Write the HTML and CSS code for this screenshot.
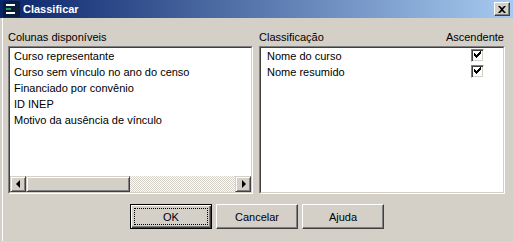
FILE: index.html
```html
<!DOCTYPE html>
<html lang="pt">
<head>
  <meta charset="UTF-8">
  <title>Classificar</title>
  <link rel="stylesheet" href="styles.css">
</head>
<body>
  <div class="window">
    <div class="titlebar">
      <svg class="app-icon" width="17" height="16" viewBox="0 0 17 16">
        <rect width="17" height="16" fill="#0b1c3c"/>
        <rect x="3" y="3" width="9" height="2" fill="#ffffff"/>
        <rect x="3" y="7" width="5" height="2" fill="#22a050"/>
        <rect x="3" y="11" width="9" height="2" fill="#ffffff"/>
      </svg>
      <span class="title">Classificar</span>
      <button class="close">
        <svg width="8" height="7" viewBox="0 0 8 7">
          <path d="M0 0h2l2 2 2-2h2L5 3.5 8 7H6L4 5 2 7H0l3-3.5z" fill="#000"/>
        </svg>
      </button>
    </div>

    <div class="content">
      <div class="panes">
        <div class="pane left">
          <div class="pane-head">Colunas disponíveis</div>
          <div class="listbox">
            <div class="listbox-inner">
              <ul class="items">
                <li>Curso representante</li>
                <li>Curso sem vínculo no ano do censo</li>
                <li>Financiado por convênio</li>
                <li>ID INEP</li>
                <li>Motivo da ausência de vínculo</li>
              </ul>
              <div class="hscroll">
                <div class="sb-btn"><span class="arrow-left"></span></div>
                <div class="sb-thumb"></div>
                <div class="sb-track"></div>
                <div class="sb-btn"><span class="arrow-right"></span></div>
              </div>
            </div>
          </div>
        </div>

        <div class="pane right">
          <div class="pane-head">
            <span>Classificação</span>
            <span>Ascendente</span>
          </div>
          <div class="listbox">
            <div class="listbox-inner">
              <ul class="items sort-items">
                <li class="sort-row"><span>Nome do curso</span><span class="checkbox checked"></span></li>
                <li class="sort-row"><span>Nome resumido</span><span class="checkbox checked"></span></li>
              </ul>
            </div>
          </div>
        </div>
      </div>

      <div class="buttons">
        <button class="btn default">OK</button>
        <button class="btn">Cancelar</button>
        <button class="btn">Ajuda</button>
      </div>
    </div>
  </div>
</body>
</html>
```

FILE: styles.css
```css
body {
  margin: 0;
  font-family: Tahoma, "Liberation Sans", Arial, sans-serif;
  font-size: 11px;
  color: #000;
  background-color: #d4d0c8;
}

.window {
  width: 513px;
  height: 241px;
  background-color: #d4d0c8;
  overflow: hidden;
}

/* title bar */
.titlebar {
  height: 18px;
  display: flex;
  align-items: center;
  background: linear-gradient(to right, #0a246a, #a6caf0);
}

.app-icon {
  margin-left: 3px;
  flex-shrink: 0;
}

.title {
  margin-left: 3px;
  color: #fff;
  font-weight: bold;
  font-size: 11px;
  flex: 1;
}

.close {
  width: 16px;
  height: 14px;
  margin-right: 3px;
  padding: 0;
  display: flex;
  align-items: center;
  justify-content: center;
  background-color: #d4d0c8;
  border: 1px solid;
  border-color: #fff #404040 #404040 #fff;
  box-shadow: inset -1px -1px #808080;
}

/* body */
.content {
  padding: 11px 8px 0 8px;
  box-shadow: inset 2px 0 #d4d0c8, inset 3px 0 #fff;
  height: 223px;
  box-sizing: border-box;
}

.panes {
  display: flex;
  gap: 6px;
}

.pane.left {
  width: 245px;
}

.pane.right {
  width: 246px;
}

.pane-head {
  height: 16px;
  line-height: 16px;
  margin-bottom: 1px;
  display: flex;
  justify-content: space-between;
  padding-right: 1px;
}

.listbox {
  height: 148px;
  box-sizing: border-box;
  border: 1px solid;
  border-color: #808080 #fff #fff #808080;
}

.listbox-inner {
  height: 100%;
  box-sizing: border-box;
  border: 1px solid;
  border-color: #404040 #d4d0c8 #d4d0c8 #404040;
  background-color: #fff;
  display: flex;
  flex-direction: column;
}

.items {
  list-style: none;
  margin: 0;
  padding: 0 0 0 4px;
  flex: 1;
}

.sort-items {
  padding-left: 6px;
}

.items li {
  height: 16px;
  line-height: 16px;
  white-space: nowrap;
}

.sort-row {
  display: flex;
  align-items: center;
  justify-content: space-between;
}

.checkbox {
  width: 13px;
  height: 13px;
  box-sizing: border-box;
  margin-right: 19px;
  margin-top: -1px;
  border: 1px solid;
  border-color: #808080 #fff #fff #808080;
  box-shadow: inset 1px 1px #404040, inset -1px -1px #d4d0c8;
  background-color: #fff;
  position: relative;
}

.checkbox.checked::after {
  content: "";
  position: absolute;
  left: 2px;
  top: 1px;
  width: 7px;
  height: 7px;
  background: no-repeat url("data:image/svg+xml,%3Csvg xmlns='http://www.w3.org/2000/svg' width='7' height='7'%3E%3Cpath d='M0 2h1v1h1v1h1V3h1V2h1V1h1V0h1v3H6v1H5v1H4v1H3v1H2V6H1V5H0z' fill='%23000'/%3E%3C/svg%3E");
}

/* horizontal scrollbar */
.hscroll {
  height: 16px;
  display: flex;
}

.sb-btn,
.sb-thumb {
  height: 16px;
  box-sizing: border-box;
  background-color: #d4d0c8;
  border: 1px solid;
  border-color: #d4d0c8 #404040 #404040 #d4d0c8;
  box-shadow: inset 1px 1px #fff, inset -1px -1px #808080;
}

.sb-btn {
  width: 16px;
  display: flex;
  align-items: center;
  justify-content: center;
}

.sb-thumb {
  width: 104px;
}

.sb-track {
  flex: 1;
  background: repeating-conic-gradient(#fff 0 25%, #d4d0c8 0 50%) 0 0 / 2px 2px;
}

.arrow-left,
.arrow-right {
  width: 0;
  height: 0;
  border-top: 4px solid transparent;
  border-bottom: 4px solid transparent;
}

.arrow-left {
  border-right: 4px solid #000;
  margin-left: -1px;
}

.arrow-right {
  border-left: 4px solid #000;
  margin-left: 1px;
}

/* buttons */
.buttons {
  display: flex;
  justify-content: center;
  gap: 4px;
  margin-top: 10px;
  padding-left: 1px;
}

.btn {
  width: 82px;
  height: 25px;
  padding: 0;
  font-family: inherit;
  font-size: 11px;
  color: #000;
  background-color: #d4d0c8;
  border: 1px solid;
  border-color: #fff #404040 #404040 #fff;
  box-shadow: inset -1px -1px #808080;
  position: relative;
}

.btn.default {
  border-color: #000;
  box-shadow: inset 1px 1px #fff, inset -1px -1px #404040, inset -2px -2px #808080;
}

.btn.default::after {
  content: "";
  position: absolute;
  left: 3px;
  top: 3px;
  right: 3px;
  bottom: 3px;
  border: 1px dotted #000;
}
```
